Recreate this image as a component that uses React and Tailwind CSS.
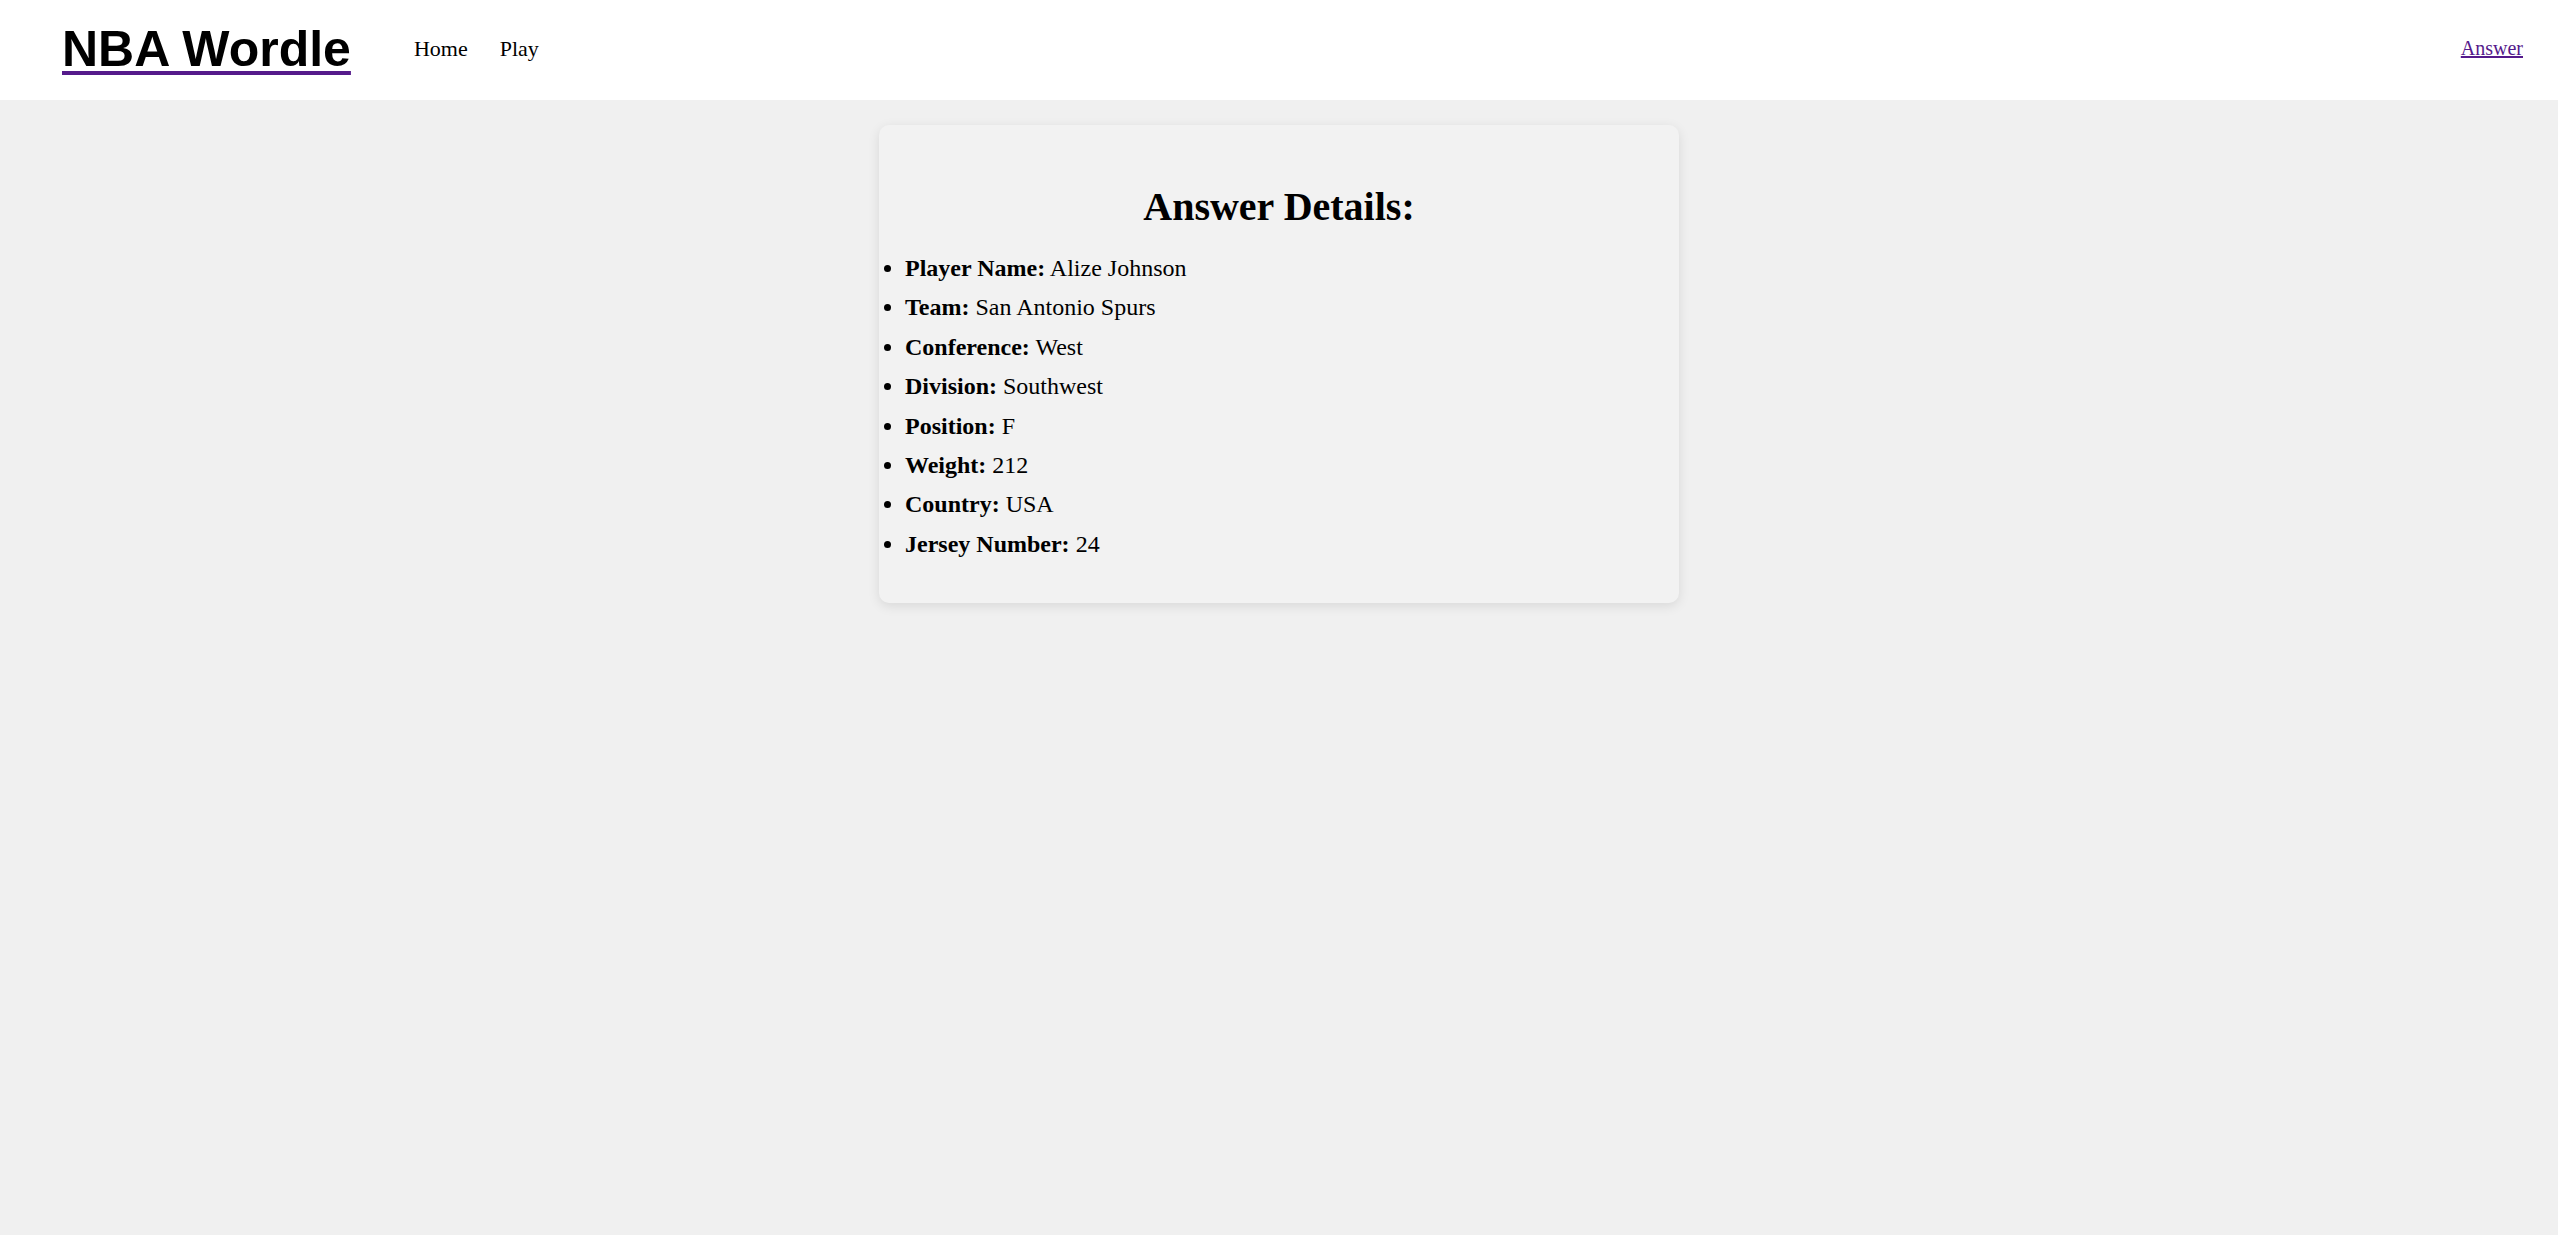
export default function App() {
  const rows = [
    ["Player Name:", "Alize Johnson"],
    ["Team:", "San Antonio Spurs"],
    ["Conference:", "West"],
    ["Division:", "Southwest"],
    ["Position:", "F"],
    ["Weight:", "212"],
    ["Country:", "USA"],
    ["Jersey Number:", "24"],
  ];
  return (
    <div className="min-h-[1235px] bg-[#f0f0f0] font-['Liberation_Serif',serif] text-black">
      <header className="h-[100px] bg-white flex items-center pb-[3px] pl-[62px] pr-[35px]">
        <a
          href="#"
          className="font-['Liberation_Sans',Arial,sans-serif] font-bold text-[50px] leading-[56px] underline decoration-[#551A8B] decoration-[4px] underline-offset-[5px] text-black"
        >
          NBA Wordle
        </a>
        <nav className="flex items-center gap-[32px] ml-[63px] text-[22px] leading-[25px]">
          <a href="#" className="text-black no-underline">Home</a>
          <a href="#" className="text-black no-underline">Play</a>
        </nav>
        <a href="#" className="ml-auto text-[20px] leading-[23px] underline text-[#551A8B]">
          Answer
        </a>
      </header>
      <main className="pt-[25px]">
        <div className="mx-auto w-[800px] bg-[#f2f2f2] rounded-[10px] shadow-[0_3px_12px_rgba(0,0,0,0.1)] pt-[59px] pb-[39px]">
          <h2 className="text-center font-bold text-[40px] leading-[46px]">Answer Details:</h2>
          <ul className="list-disc pl-[26px] mt-[19px] text-[24px] leading-[39.4px]">
            {rows.map(([k, v]) => (
              <li key={k}>
                <strong className="font-bold">{k}</strong> {v}
              </li>
            ))}
          </ul>
        </div>
      </main>
    </div>
  );
}
